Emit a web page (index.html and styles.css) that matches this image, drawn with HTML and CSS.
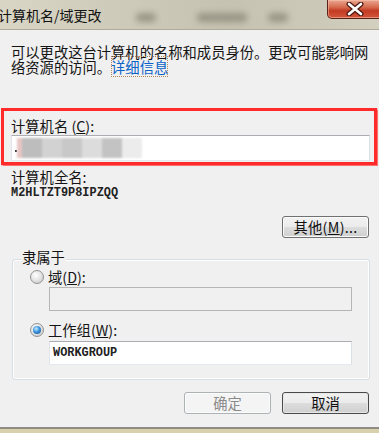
FILE: index.html
```html
<!DOCTYPE html>
<html lang="zh-CN">
<head>
<meta charset="utf-8">
<title>计算机名/域更改</title>
<link rel="stylesheet" href="styles.css">
</head>
<body>
<div class="window">
  <div class="titlebar">
    <span class="blob blob1"></span>
    <span class="blob blob2"></span>
    <span class="blob blob3"></span>
    <span class="title">计算机名/域更改</span>
    <div class="close">
      <svg width="20" height="14" viewBox="0 0 20 14">
        <path d="M4 2 L16 12 M16 2 L4 12" stroke="#4a1a12" stroke-width="5" stroke-linecap="round"/>
        <path d="M4 2 L16 12 M16 2 L4 12" stroke="#ffffff" stroke-width="2.6" stroke-linecap="round"/>
      </svg>
    </div>
  </div>
  <div class="client">
    <p class="desc">可以更改这台计算机的名称和成员身份。更改可能影响网络资源的访问。<a class="link" href="#">详细信息</a></p>
    <div class="redbox">
      <div class="label">计算机名 (<u>C</u>):</div>
      <div class="tb tb-name">
        <span class="dot"></span>
        <div class="mosaic">
          <span class="m m1"></span><span class="m m2"></span><span class="m m3"></span><span class="m m4"></span><span class="m m5"></span><span class="m m6"></span><span class="m m7"></span>
        </div>
      </div>
    </div>
    <div class="fullname-label">计算机全名:</div>
    <div class="fullname">M2HLTZT9P8IPZQQ</div>
    <div class="other-row">
      <button class="btn btn-other">其他(<u>M</u>)...</button>
    </div>
    <div class="group">
      <span class="legend">隶属于</span>
      <div class="radio-row row1"><span class="radio"></span><span>域(<u>D</u>):</span></div>
      <div class="tb tb-field tb-disabled tb-domain"></div>
      <div class="radio-row row2"><span class="radio radio-on"></span><span>工作组(<u>W</u>):</span></div>
      <div class="tb tb-field tb-work"><span class="mono">WORKGROUP</span></div>
    </div>
    <div class="button-row">
      <button class="btn btn-disabled">确定</button>
      <button class="btn btn-default">取消</button>
    </div>
  </div>
  <div class="frame-bottom"></div>
</div>
</body>
</html>
```
FILE: styles.css
```css
html, body {
  margin: 0;
  padding: 0;
}
body {
  width: 379px;
  height: 433px;
  overflow: hidden;
  font-family: "Noto Sans CJK SC", "Noto Sans", sans-serif;
  font-size: 14.3px;
  color: #141414;
  background: #f0f0f0;
}
.window {
  display: flex;
  flex-direction: column;
  width: 379px;
  height: 433px;
}
.titlebar {
  position: relative;
  height: 29px;
  flex: none;
  display: flex;
  align-items: center;
  justify-content: space-between;
  background: linear-gradient(90deg, #d9d6c6 0%, #cfcbba 30%, #c6c2b1 60%, #cdc9b8 85%, #d4d0c0 100%);
  border-bottom: 1px solid #aeab9d;
  overflow: hidden;
}
.blob {
  position: absolute;
  top: 13px;
  height: 9px;
  background: #8e8a7c;
  filter: blur(3px);
  border-radius: 4px;
  opacity: 0.8;
}
.blob1 { left: 136px; width: 20px; }
.blob2 { left: 197px; width: 50px; }
.blob3 { left: 268px; width: 20px; }
.title {
  position: relative;
  margin-left: -2px;
  font-size: 14px;
  line-height: 16px;
  color: #111;
}
.close {
  position: relative;
  align-self: flex-start;
  width: 56px;
  height: 19px;
  margin-right: -4px;
  box-sizing: border-box;
  border: 1px solid #5a2218;
  border-top: none;
  border-radius: 0 0 0 5px;
  background: linear-gradient(#e9a792 0%, #d66a4e 40%, #c23a22 60%, #d2583c 100%);
  display: flex;
  align-items: center;
  justify-content: center;
  box-shadow: inset 0 0 0 1px rgba(255, 200, 180, 0.5);
}
.client {
  height: 397px;
  flex: none;
  background: #f0f0f0;
  overflow: hidden;
}
.desc {
  margin: 15px 0 0 11px;
  width: 362px;
  line-height: 14.5px;
}
.link {
  color: #0a63c8;
  text-decoration: none;
  outline: 1px dotted #b0865a;
  outline-offset: -1px;
}
.redbox {
  margin: 34px 0 0 1px;
  width: 376px;
  box-sizing: border-box;
  border: 3px solid #ff2b2b;
  box-shadow: 0 0 1px 0.5px #ff7070;
  padding: 6px 4px 1px 7px;
}
.label {
  line-height: 17px;
}
.tb {
  box-sizing: border-box;
  background: #fff;
  border: 1px solid;
  border-color: #abadb3 #dbdfe6 #e3e9ef #e2e3ea;
}
.tb-name {
  margin-top: 1px;
  height: 26px;
  display: flex;
  align-items: center;
  padding-left: 3px;
  position: relative;
}
.dot {
  width: 2px;
  height: 2px;
  background: #333;
  margin-top: 6px;
}
.mosaic {
  display: flex;
  filter: blur(1.2px);
}
.m {
  width: 20px;
  height: 20px;
}
.m1 { width: 5px; background: #e7c6c4; }
.m2 { background: #bdbdbd; }
.m3 { background: #d2d2d2; }
.m4 { background: #c8c8c8; }
.m5 { background: #dcdcdc; }
.m6 { background: #c3c3c3; }
.m7 { background: #ececec; }
.fullname-label {
  margin: 4px 0 0 11px;
  line-height: 15px;
}
.fullname, .mono {
  font-family: "Liberation Mono", "DejaVu Sans Mono", monospace;
  font-weight: bold;
  font-size: 11.9px;
  color: #222;
}
.fullname {
  margin: 1px 0 0 11px;
  line-height: 16px;
}
.other-row {
  margin-top: 15px;
  display: flex;
  justify-content: flex-end;
  padding-right: 10px;
}
.btn {
  box-sizing: border-box;
  height: 22px;
  width: 87px;
  padding: 0;
  font-family: inherit;
  font-size: 14.3px;
  line-height: 18px;
  color: #111;
  border: 1px solid #707070;
  border-radius: 3px;
  background: linear-gradient(#f2f2f2 0%, #ebebeb 50%, #dddddd 50%, #cfcfcf 100%);
  box-shadow: inset 0 0 0 1px #fbfbfb;
}
.btn-other {
  letter-spacing: 0.3px;
}
.btn-disabled {
  color: #8a8a8a;
  border-color: #adb2b5;
  background: #f4f4f4;
}
.btn-default {
  border-color: #4a4a4a;
  box-shadow: inset 0 0 0 1px #e8e8e8;
}
.group {
  position: relative;
  margin: 21px 0 0 12px;
  width: 358px;
  box-sizing: border-box;
  border: 1px solid #d5dfe5;
  border-radius: 3px;
  box-shadow: inset 0 0 0 1px #ffffff;
  padding: 9px 0 14px 0;
}
.legend {
  position: absolute;
  top: -11px;
  left: 8px;
  padding: 0 1px;
  line-height: 16px;
  background: #f0f0f0;
}
.radio-row {
  display: flex;
  align-items: center;
  gap: 4px;
  padding-left: 17px;
  line-height: 16px;
}
.row2 {
  margin-top: 11px;
}
.radio {
  position: relative;
  width: 14px;
  height: 14px;
  box-sizing: border-box;
  border-radius: 50%;
  border: 1px solid #939393;
  background: radial-gradient(circle at 40% 35%, #ffffff 0%, #e6e6e6 45%, #c2c2c2 100%);
}
.radio-on::after {
  content: "";
  position: absolute;
  left: 2px;
  top: 2px;
  width: 8px;
  height: 8px;
  border-radius: 50%;
  background: radial-gradient(circle at 40% 35%, #c6ecff 0%, #3b93dc 45%, #124a8a 100%);
}
.tb-field {
  margin-left: 36px;
  width: 303px;
  height: 24px;
}
.tb-domain {
  margin-top: 2px;
}
.tb-disabled {
  background: #f0f0f0;
  border-color: #b5b5b5;
}
.tb-work {
  margin-top: 3px;
  display: flex;
  align-items: center;
  padding-left: 3px;
}
.button-row {
  margin-top: 12px;
  display: flex;
  justify-content: flex-end;
  gap: 11px;
  padding-right: 10px;
}
.frame-bottom {
  flex: 1;
  border-top: 2px solid #8d8b82;
  background: #d9d0ae;
}
```
